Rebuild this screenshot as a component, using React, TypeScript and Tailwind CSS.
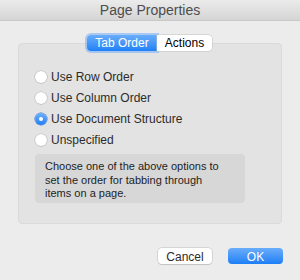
import React, { useState } from 'react';

const options = ['Use Row Order', 'Use Column Order', 'Use Document Structure', 'Unspecified'];

const Radio: React.FC<{ checked: boolean }> = ({ checked }) =>
  checked ? (
    <span className="flex h-[12px] w-[12px] items-center justify-center rounded-full bg-gradient-to-b from-[#6bb0fa] to-[#1f7ff2] shadow-[0_0_0_0.5px_#2a74d6]">
      <span className="h-[4px] w-[4px] rounded-full bg-white" />
    </span>
  ) : (
    <span className="h-[12px] w-[12px] rounded-full bg-white shadow-[0_0_0_0.5px_#b5b5b5,0_0.5px_1px_rgba(0,0,0,0.15)]" />
  );

const App: React.FC = () => {
  const [tab, setTab] = useState<'order' | 'actions'>('order');
  const [choice, setChoice] = useState(2);

  return (
    <div className="h-[280px] w-[300px] overflow-hidden bg-[#ececec] font-['Liberation_Sans',sans-serif] text-[#2b2b2b]">
      <div className="flex h-[21px] items-center justify-center border-b border-[#c9c9c9] bg-gradient-to-b from-[#ebebeb] to-[#d5d5d5] text-[14px] text-[#4d4d4d]">
        Page Properties
      </div>

      <div className="relative mx-[18px] mt-[22px] h-[181px] rounded-[4px] border border-[#dadada] bg-[#e3e3e3] px-[16px] pt-[27px]">
        <div className="absolute left-[68px] top-[-9px] flex h-[16px] text-[12px]">
          <button
            onClick={() => setTab('order')}
            className="flex w-[70px] items-center justify-center rounded-l-[4px] bg-gradient-to-b from-[#69adfa] to-[#1d80f6] text-white shadow-[0_0_0_2px_rgba(90,160,250,0.45)]"
          >
            Tab Order
          </button>
          <button
            onClick={() => setTab('actions')}
            className="flex w-[55px] items-center justify-center rounded-r-[4px] bg-white text-black shadow-[0_0_0_0.5px_#c0c0c0]"
          >
            Actions
          </button>
        </div>

        {tab === 'order' && (
          <>
            <div className="flex flex-col gap-[9px] text-[12px]">
              {options.map((o, i) => (
                <label key={o} onClick={() => setChoice(i)} className="flex h-[12px] items-center gap-[4px]">
                  <Radio checked={choice === i} />
                  <span>{o}</span>
                </label>
              ))}
            </div>
            <div className="mt-[8px] h-[49px] w-[210px] rounded-[4px] bg-[#d7d7d7] pl-[10px] pr-[24px] pt-[6px] text-[11px] leading-[13.5px] text-[#1e1e1e]">
              Choose one of the above options to set the order for tabbing through items on a page.
            </div>
          </>
        )}
      </div>

      <div className="mt-[24px] flex justify-end gap-[16px] pr-[17px] text-[12px]">
        <button className="h-[16px] w-[54px] rounded-[4px] bg-white text-[#2b2b2b] shadow-[0_0_0_0.5px_#bdbdbd,0_1px_1px_rgba(0,0,0,0.15)]">
          Cancel
        </button>
        <button className="h-[16px] w-[55px] rounded-[4px] bg-gradient-to-b from-[#69adfa] to-[#1a7ef6] text-white">
          OK
        </button>
      </div>
    </div>
  );
};

export default App;
